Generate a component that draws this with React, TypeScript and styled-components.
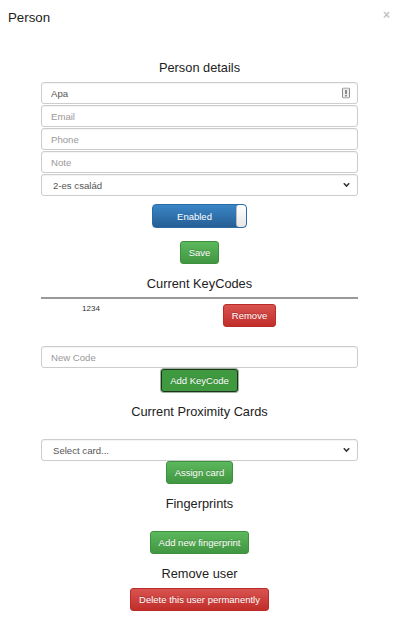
import React from "react";
import styled, { createGlobalStyle, css } from "styled-components";

const Global = createGlobalStyle`
  html, body {
    margin: 0;
    padding: 0;
    background: #fff;
  }
  body {
    font-family: "Liberation Sans", Arial, sans-serif;
    color: #333;
  }
`;

const Modal = styled.div`
  width: 400px;
  height: 620px;
  background: #fff;
  overflow: hidden;
`;

const Header = styled.div`
  display: flex;
  justify-content: space-between;
  align-items: flex-start;
  height: 36px;
  box-sizing: border-box;
  padding: 10px 10px 0 8px;
`;

const Title = styled.div`
  font-size: 13.3px;
  line-height: 16px;
  color: #222;
`;

const Close = styled.div`
  font-size: 12px;
  line-height: 10px;
  font-weight: bold;
  color: #c4c4c4;
`;

const Body = styled.div`
  display: flex;
  flex-direction: column;
  align-items: center;
  padding: 0 42px 0 41px;
`;

const Heading = styled.div<{ $top: number; $bottom: number }>`
  font-size: 12.8px;
  line-height: 16px;
  color: #222;
  margin-top: ${(p) => p.$top}px;
  margin-bottom: ${(p) => p.$bottom}px;
`;

const fieldBase = css`
  width: 100%;
  height: 22px;
  box-sizing: border-box;
  border: 1px solid #ccc;
  border-radius: 3px;
  background: #fff;
  font-family: "Liberation Sans", Arial, sans-serif;
  font-size: 9.6px;
  color: #555;
  padding: 0 9px;
  box-shadow: inset 0 1px 1px rgba(0, 0, 0, 0.05);
  outline: none;
  &::placeholder {
    color: #999;
  }
`;

const FieldWrap = styled.div`
  position: relative;
  width: 100%;
  margin-bottom: 1px;
`;

const Input = styled.input`
  ${fieldBase}
  display: block;
`;

const Select = styled.select`
  ${fieldBase}
  display: block;
  appearance: none;
  padding-left: 11px;
`;

const Overlay = styled.span`
  position: absolute;
  right: 8px;
  top: 50%;
  transform: translateY(-50%);
  display: flex;
  pointer-events: none;
`;

const Toggle = styled.div`
  display: flex;
  width: 95px;
  height: 24px;
  box-sizing: border-box;
  margin-top: 7px;
  border: 1px solid #2b6aa3;
  border-radius: 4px;
  overflow: hidden;
  background: linear-gradient(#3a85c6, #255f95);
`;

const ToggleLabel = styled.div`
  flex: 1;
  display: flex;
  align-items: center;
  justify-content: center;
  color: #fff;
  font-size: 9.5px;
`;

const Knob = styled.div`
  width: 9px;
  background: linear-gradient(#fff, #e6e6e6);
  border-left: 1px solid #bbb;
  border-radius: 3px;
`;

const Button = styled.button<{ $variant: "success" | "danger"; $top: number; $focus?: boolean }>`
  height: 23px;
  box-sizing: border-box;
  padding: 0 8px;
  margin-top: ${(p) => p.$top}px;
  border-radius: 3px;
  font-family: "Liberation Sans", Arial, sans-serif;
  font-size: 9.5px;
  color: #fff;
  cursor: pointer;
  text-shadow: 0 -1px 0 rgba(0, 0, 0, 0.2);
  ${(p) =>
    p.$variant === "success"
      ? css`
          background: linear-gradient(#5cb85c, #419641);
          border: 1px solid #3e8f3e;
        `
      : css`
          background: linear-gradient(#d9534f, #c12e2a);
          border: 1px solid #b92c28;
        `}
  ${(p) =>
    p.$focus &&
    css`
      background: #3f9a3f;
      border: 1px solid #1d331d;
      box-shadow: 0 0 0 1px #9db39d;
    `}
`;

const Rule = styled.div`
  width: 100%;
  height: 0;
  border-top: 2px solid #999;
  margin-top: 5px;
`;

const CodeRow = styled.div`
  display: grid;
  grid-template-columns: 100px 1fr;
  width: 100%;
  margin-top: 5px;
`;

const CodeCell = styled.div`
  text-align: center;
  font-size: 8px;
  line-height: 10px;
  color: #333;
`;

const ActionCell = styled.div`
  display: flex;
  justify-content: center;
`;

const Spacer = styled.div<{ $h: number }>`
  height: ${(p) => p.$h}px;
`;

const Chevron = () => (
  <svg width="7" height="5" viewBox="0 0 7 5">
    <path d="M0.8 0.8 L3.5 3.6 L6.2 0.8" fill="none" stroke="#333" strokeWidth="1.5" />
  </svg>
);

const CardIcon = () => (
  <svg width="8" height="11" viewBox="0 0 8 11">
    <rect x="0.5" y="0.5" width="7" height="10" rx="1" fill="#eee" stroke="#8a8a8a" />
    <rect x="3" y="2.5" width="2" height="4" fill="#8a8a8a" />
    <rect x="3" y="7.5" width="2" height="1.5" fill="#8a8a8a" />
  </svg>
);

export default function App() {
  return (
    <Modal>
      <Global />
      <Header>
        <Title>Person</Title>
        <Close>×</Close>
      </Header>
      <Body>
        <Heading $top={24} $bottom={6}>
          Person details
        </Heading>
        <FieldWrap>
          <Input defaultValue="Apa" />
          <Overlay>
            <CardIcon />
          </Overlay>
        </FieldWrap>
        <FieldWrap>
          <Input placeholder="Email" />
        </FieldWrap>
        <FieldWrap>
          <Input placeholder="Phone" />
        </FieldWrap>
        <FieldWrap>
          <Input placeholder="Note" />
        </FieldWrap>
        <FieldWrap>
          <Select defaultValue="2-es család">
            <option>2-es család</option>
          </Select>
          <Overlay>
            <Chevron />
          </Overlay>
        </FieldWrap>
        <Toggle>
          <ToggleLabel>Enabled</ToggleLabel>
          <Knob />
        </Toggle>
        <Button $variant="success" $top={13}>
          Save
        </Button>
        <Heading $top={12} $bottom={0}>
          Current KeyCodes
        </Heading>
        <Rule />
        <CodeRow>
          <CodeCell>1234</CodeCell>
          <ActionCell>
            <Button $variant="danger" $top={0}>
              Remove
            </Button>
          </ActionCell>
        </CodeRow>
        <Spacer $h={19} />
        <FieldWrap>
          <Input placeholder="New Code" />
        </FieldWrap>
        <Button $variant="success" $top={0} $focus>
          Add KeyCode
        </Button>
        <Heading $top={12} $bottom={19}>
          Current Proximity Cards
        </Heading>
        <FieldWrap>
          <Select defaultValue="">
            <option value="">Select card...</option>
          </Select>
          <Overlay>
            <Chevron />
          </Overlay>
        </FieldWrap>
        <Button $variant="success" $top={-1}>
          Assign card
        </Button>
        <Heading $top={12} $bottom={0}>
          Fingerprints
        </Heading>
        <Button $variant="success" $top={19}>
          Add new fingerprint
        </Button>
        <Heading $top={12} $bottom={0}>
          Remove user
        </Heading>
        <Button $variant="danger" $top={6}>
          Delete this user permanently
        </Button>
      </Body>
    </Modal>
  );
}
